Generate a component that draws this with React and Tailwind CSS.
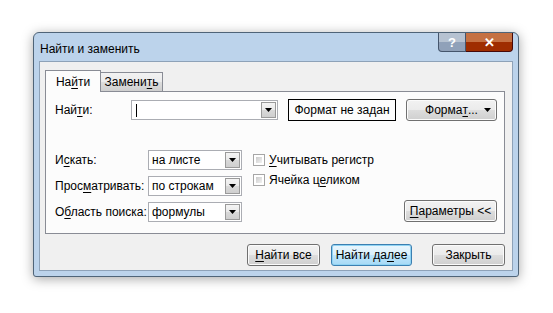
import React from 'react'

// Excel "Найти и заменить" dialog, Win7 look

function U({ children }) {
  return <span className="underline underline-offset-[2px]">{children}</span>
}

function Arrow() {
  return (
    <svg width="7" height="4" viewBox="0 0 7 4">
      <path d="M0 0h7L3.5 4z" fill="#000" />
    </svg>
  )
}

function Combo({ value, width, caret }) {
  return (
    <div
      className="flex h-[20px] items-stretch border border-[#abadb3] bg-white"
      style={{ width }}
    >
      <div className="flex flex-1 items-center pl-[3px] text-[12px] text-black">
        {caret ? <span className="ml-[1px] h-[13px] w-px bg-black" /> : value}
      </div>
      <div className="m-px flex w-[15px] items-center justify-center border border-[#9a9a9a] bg-[linear-gradient(#f4f4f4,#e9e9e9_50%,#d9d9d9_51%,#cfcfcf)]">
        <Arrow />
      </div>
    </div>
  )
}

function Btn({ children, className = '', main }) {
  return (
    <button
      className={
        'flex h-[22px] items-center justify-center rounded-[3px] border text-[12px] text-black ' +
        (main
          ? 'border-[#3c7fb1] bg-[linear-gradient(#eaf6fd,#d9f0fc_50%,#bee6fd_51%,#a7d9f5)] shadow-[inset_0_0_0_1px_#8fd3f3] '
          : 'border-[#707070] bg-[linear-gradient(#f2f2f2,#ebebeb_50%,#dddddd_51%,#cfcfcf)] shadow-[inset_0_0_0_1px_#fbfbfb] ') +
        className
      }
    >
      {children}
    </button>
  )
}

function Check({ children }) {
  return (
    <div className="flex h-[20px] items-center gap-[4px] text-[12px] text-black">
      <span className="h-[12px] w-[12px] border border-[#a6a6a6] bg-white p-[2px]">
        <span className="block h-full w-full bg-[linear-gradient(135deg,#cbcbcb,#f2f2f2)]" />
      </span>
      <span>{children}</span>
    </div>
  )
}

function TitleButtons() {
  return (
    <div className="mr-[5px] flex h-[19px]">
      <span className="relative flex h-[19px] w-[28px] items-center justify-center overflow-hidden rounded-bl-[4px] border border-t-0 border-slate-600 bg-slate-400 text-[13px] font-bold leading-none text-white">
        <span className="absolute inset-x-0 top-0 h-[9px] bg-white/35" />
        <span className="relative">?</span>
      </span>
      <span className="relative flex h-[19px] w-[47px] items-center justify-center overflow-hidden rounded-br-[4px] border border-l-0 border-t-0 border-red-950 bg-orange-800 text-[13px] font-bold leading-none text-white">
        <span className="absolute inset-x-0 top-0 h-[9px] bg-orange-200/40" />
        <span className="relative">✕</span>
      </span>
    </div>
  )
}

export default function App() {
  return (
    <div className="h-[313px] w-[553px] overflow-hidden whitespace-nowrap bg-white pl-[33px] pt-[32px] font-['Liberation_Sans',Arial,sans-serif]">
      <div className="flex h-[245px] w-[486px] flex-col rounded-t-[6px] rounded-b-[3px] border border-[#4f6478] bg-[#bcd3eb] shadow-[0_2px_12px_rgba(0,0,0,0.35)]">
        {/* title bar */}
        <div className="flex h-[28px] items-start justify-between">
          <div className="pl-[6px] pt-[7px] text-[12px] text-black">Найти и заменить</div>
          <TitleButtons />
        </div>

        {/* client area */}
        <div className="mx-[5px] flex flex-1 flex-col border border-[#8ea2b8] bg-[#f0f0f0] pl-[5px] pr-[7px] pt-[7px]">
          {/* tabs */}
          <div className="flex h-[22px] items-end">
            <div className="relative z-10 -mb-px flex h-[22px] w-[56px] items-center justify-center border border-b-0 border-[#898c95] bg-[#fcfcfc] text-[12px] text-black">
              На<U>й</U>ти
            </div>
            <div className="flex h-[19px] w-[62px] items-center justify-center border border-b-0 border-l-0 border-[#898c95] bg-[linear-gradient(#f2f2f2,#ebebeb_50%,#dddddd_51%,#cfcfcf)] text-[12px] text-black">
              Замени<U>т</U>ь
            </div>
          </div>

          {/* tab panel */}
          <div className="flex h-[143px] w-[460px] flex-col border border-[#898c95] bg-[#fcfcfc] pl-[9px] pr-[7px] pt-[7px]">
            <div className="flex h-[22px] items-center">
              <div className="w-[76px] text-[12px] text-black">
                Най<U>т</U>и:
              </div>
              <Combo width={147} caret />
              <div className="ml-[10px] flex h-[22px] w-[108px] items-center justify-center border border-black text-[12px] text-black">
                Формат не задан
              </div>
              <Btn className="relative ml-[10px] w-[91px]">
                Форма<U>т</U>...
                <span className="absolute right-[5px] top-[8px] flex">
                  <Arrow />
                </span>
              </Btn>
            </div>

            <div className="mt-[29px] flex">
              <div className="grid grid-cols-[93px_94px] items-center gap-y-[6px]">
                <div className="text-[12px] text-black">
                  И<U>с</U>кать:
                </div>
                <Combo width={94} value="на листе" />
                <div className="text-[12px] text-black">
                  Прос<U>м</U>атривать:
                </div>
                <Combo width={94} value="по строкам" />
                <div className="text-[12px] text-black">
                  О<U>б</U>ласть поиска:
                </div>
                <Combo width={94} value="формулы" />
              </div>
              <div className="ml-[11px] flex flex-1 flex-col">
                <Check>
                  <U>У</U>читывать регистр
                </Check>
                <Check>
                  Ячейка ц<U>е</U>ликом
                </Check>
              </div>
              <div className="flex flex-col justify-end">
                <Btn className="w-[93px]">
                  <U>П</U>араметры &lt;&lt;
                </Btn>
              </div>
            </div>
          </div>

          {/* bottom buttons */}
          <div className="mt-[10px] flex w-[460px] justify-end">
            <Btn className="w-[73px]">
              <U>Н</U>айти все
            </Btn>
            <Btn main className="ml-[11px] w-[81px]">
              Найти да<U>л</U>ее
            </Btn>
            <Btn className="ml-[20px] w-[73px]">Закрыть</Btn>
          </div>
        </div>
        <div className="h-[5px]" />
      </div>
    </div>
  )
}
